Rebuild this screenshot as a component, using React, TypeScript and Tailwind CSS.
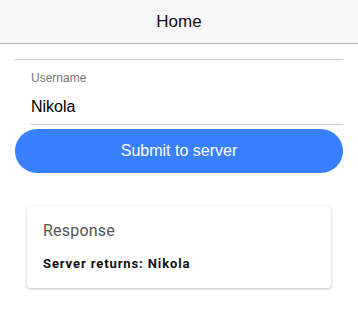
export default function App(): React.JSX.Element {
  return (
    <div className="w-[358px] h-[312px] bg-white font-['Liberation_Sans',Arial,sans-serif] overflow-hidden">
      {/* Toolbar */}
      <div className="h-[44px] bg-[#f8f8f8] border-b border-[#b2b2b2] flex items-center justify-center">
        <span className="text-[17px] text-[#111]">Home</span>
      </div>

      {/* Form */}
      <div className="px-[15px] pt-[15px]">
        <div className="border-t border-[#c8c8c8]">
          <div className="ml-[16px] border-b border-[#c8c8c8]">
            <p className="text-[12px] text-[#777] pt-[11px] leading-[14px]">Username</p>
            <p className="text-[16px] text-black pt-[12px] pb-[8px] leading-[19px]">Nikola</p>
          </div>
        </div>
        <button className="mt-[4px] w-full h-[44px] rounded-full bg-[#3880ff] text-white text-[16px] flex items-center justify-center">
          Submit to server
        </button>
      </div>

      {/* Response card */}
      <div className="mx-[27px] mt-[33px] bg-white rounded-[3px] shadow-[0_1px_3px_rgba(0,0,0,0.25)] px-[16px] pt-[15px] pb-[16px] font-['Roboto',Arial,sans-serif]">
        <p className="text-[16px] text-[#555] leading-[20px] tracking-[0.2px]">Response</p>
        <p className="text-[13px] font-bold text-[#111] mt-[15px] leading-[16px] tracking-[0.9px]">Server returns: Nikola</p>
      </div>
    </div>
  )
}
